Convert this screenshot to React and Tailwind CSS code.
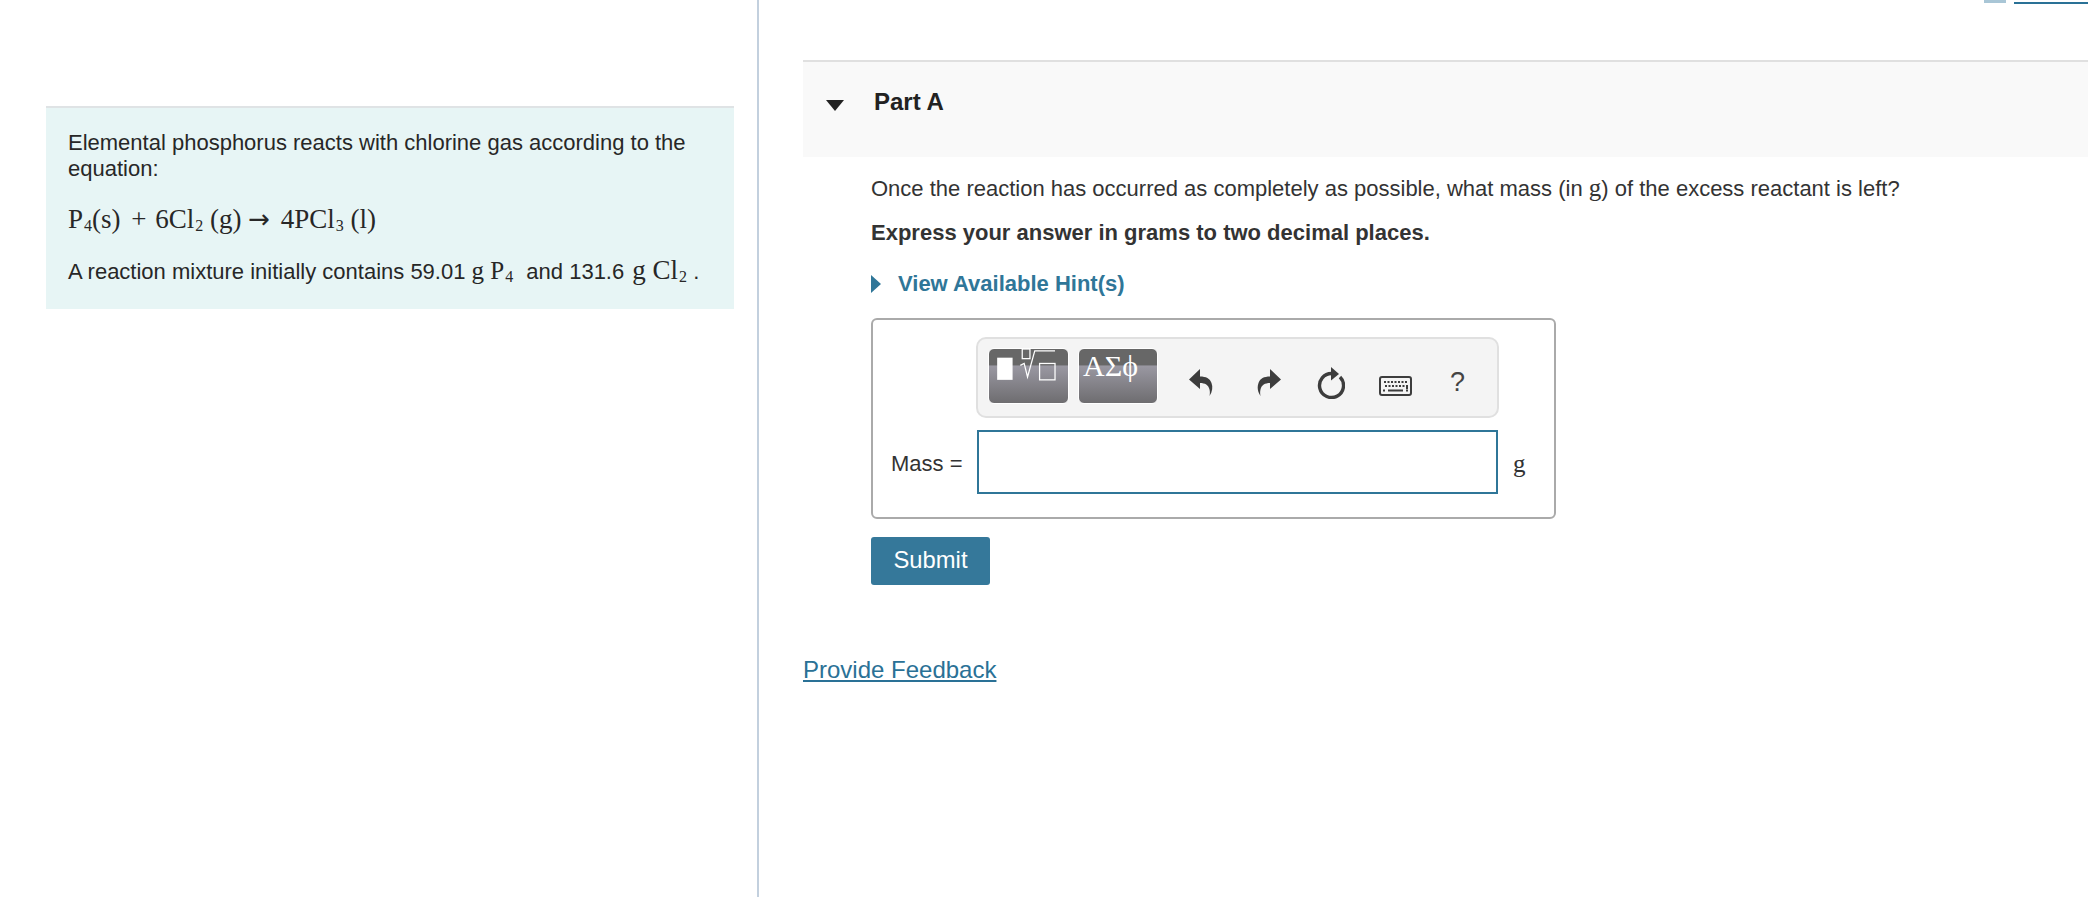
import React from "react";

const serif = "font-['Liberation_Serif',serif]";

const Sub = ({ children }) => (
  <sub className="static ml-px text-[16px] leading-none align-[-3px]">{children}</sub>
);

const UndoIcon = ({ flip }) => (
  <svg viewBox="0 0 24 27" className={`h-[27px] w-[24px] ${flip ? "-scale-x-100" : ""}`}>
    <path
      fill="#3d3d3d"
      d="M11 0 0 10.500 11 20v-6c5 0 8.500 2 9.500 6.500.5 2 .5 4 0 6.500 3-4.500 3.500-9 2-13C21 9.500 17 7.500 11 7.500V0z"
    />
  </svg>
);

const RotateIcon = () => (
  <svg viewBox="0 0 28 32" className="h-[32px] w-[28px]">
    <path
      fill="none"
      stroke="#3d3d3d"
      strokeWidth="3.400"
      d="M15 6.500A12 12 0 1 0 23 10"
    />
    <path fill="#3d3d3d" d="M14 0l8 7-8 6.500z" />
  </svg>
);

const KeyboardIcon = () => (
  <svg viewBox="0 0 33 20" className="h-[20px] w-[33px]">
    <rect x="1" y="1" width="31" height="18" rx="2" fill="#f4f4f4" stroke="#3d3d3d" strokeWidth="2" />
    <path
      stroke="#3d3d3d"
      strokeWidth="2"
      strokeDasharray="2 1.500"
      fill="none"
      d="M5 6h23M6 10h20"
    />
    <path stroke="#3d3d3d" strokeWidth="2" fill="none" d="M9 14.500h15M4 14.500h2M27 14.500h2M28 9v4" />
  </svg>
);

const TemplatesGlyph = () => (
  <svg viewBox="0 0 81 56" className="absolute inset-0 h-full w-full">
    <rect x="8" y="9" width="16" height="23" fill="#fff" />
    <path d="M32 17l4-2 3.500 14L47 2h21" fill="none" stroke="#fff" strokeWidth="1.300" />
    <rect x="34" y="0" width="8" height="10" fill="none" stroke="#fff" strokeWidth="1.300" />
    <rect x="52" y="15" width="16" height="17" fill="none" stroke="#fff" strokeWidth="1.300" />
  </svg>
);

const ToolButton = ({ children, className }) => (
  <div
    className={`relative h-[56px] overflow-hidden rounded-[6px] border border-white bg-[linear-gradient(#676767_0,#676767_30%,#9a98a2_31%,#6e6d70_100%)] ${className}`}
  >
    {children}
  </div>
);

export default function App() {
  return (
    <div className="flex h-[897px] overflow-hidden bg-white font-['Liberation_Sans',Arial,sans-serif] text-[22px] text-[#333]">
      {/* left column with the problem intro */}
      <div className="w-[759px] shrink-0 border-r-2 border-[#c3d0de] pl-[46px] pr-[23px] pt-[106px]">
        <div className="h-[203px] border-t-2 border-[#dfe3e5] bg-[#e7f5f5] px-[22px] pt-[22px] leading-[26px] text-[#272727]">
          <p>Elemental phosphorus reacts with chlorine gas according to the equation:</p>
          <p className={`${serif} mt-[22px] text-[27px] leading-[30px]`}>
            P<Sub>4</Sub>(s) <span className="ml-[4px]">+</span> <span className="ml-[2px]">6Cl</span><Sub>2</Sub> (g){" "}
            <span className="font-['DejaVu_Sans',sans-serif] text-[26px]">→</span>{" "}
            <span className="ml-[4px]">4PCl</span><Sub>3</Sub> (l)
          </p>
          <p className="mt-[23px]">
            A reaction mixture initially contains 59.01{" "}
            <span className={`${serif} text-[25px]`}>
              g P<Sub>4</Sub>
            </span>{" "}
            <span className="ml-[7px]">and 131.6</span>{" "}
            <span className={`${serif} ml-[2px] text-[27px]`}>g Cl<Sub>2</Sub></span> .
          </p>
        </div>
      </div>

      {/* right column with the question */}
      <div className="min-w-0 flex-1 pl-[44px]">
        <div className="flex h-[5px] items-end overflow-hidden pl-[1181px] leading-[26px] text-[#2a7196]">
          <div className="flex shrink-0 items-end gap-[8px]">
            <span className="mb-[2px] h-[3px] w-[22px] bg-[#a9c6d6]" />
            <span className="text-[24px] underline">Review</span>
          </div>
        </div>

        <div className="mt-[55px] flex h-[97px] border-t-2 border-[#e0e0e0] bg-[#f9f9f9] pl-[23px] pt-[27px]">
          <svg viewBox="0 0 18 11" className="mt-[11px] h-[11px] w-[18px]">
            <path fill="#222" d="M0 0h18L9 11z" />
          </svg>
          <h2 className="ml-[30px] text-[24px] font-bold leading-[26px] text-[#222]">Part A</h2>
        </div>

        <div className="pl-[68px]">
          <p className="mt-[18px] leading-[26px]">
            Once the reaction has occurred as completely as possible, what mass (in{" "}
            <span className={`${serif} text-[25px]`}>g</span>) of the excess reactant is left?
          </p>
          <p className="mt-[18px] font-bold leading-[26px]">
            Express your answer in grams to two decimal places.
          </p>
          <div className="mt-[25px] flex items-center font-bold leading-[26px] text-[#2f7698]">
            <svg viewBox="0 0 10 18" className="h-[18px] w-[10px]">
              <path fill="#2f7698" d="M0 0l10 9-10 9z" />
            </svg>
            <span className="ml-[17px]">View Available Hint(s)</span>
          </div>

          {/* answer box */}
          <div className="mt-[21px] h-[201px] w-[685px] rounded-[6px] border-2 border-[#aaa] pl-[18px] pt-[17px]">
            <div className="ml-[85px] flex h-[81px] w-[523px] items-start rounded-[10px] border-2 border-[#e0e0e0] bg-[#f4f4f4] pl-[10px] pt-[9px]">
              <ToolButton className="w-[81px]">
                <TemplatesGlyph />
              </ToolButton>
              <ToolButton className={`ml-[9px] w-[80px] ${serif} pl-[4px] text-[30px] leading-[34px] text-white`}>
                ΑΣϕ
              </ToolButton>
              <div className="ml-[31px] mt-[21px]">
                <UndoIcon />
              </div>
              <div className="ml-[44px] mt-[21px]">
                <UndoIcon flip />
              </div>
              <div className="ml-[36px] mt-[19px]">
                <RotateIcon />
              </div>
              <div className="ml-[34px] mt-[28px]">
                <KeyboardIcon />
              </div>
              <span className="ml-[38px] mt-[18px] text-[27px] leading-[32px] text-[#444]">?</span>
            </div>
            <div className="mt-[12px] flex items-center">
              <span className="mt-[3px] w-[86px] leading-[26px]">Mass =</span>
              <div className="h-[64px] w-[521px] border-2 border-[#2f7698] bg-white" />
              <span className={`${serif} ml-[15px] mt-[3px] text-[25px]`}>g</span>
            </div>
          </div>

          <button className="mt-[18px] block h-[48px] w-[119px] rounded-[3px] bg-[#35789a] pb-[2px] text-[23.800px] text-white">
            Submit
          </button>
        </div>

        <a className="mt-[72px] block w-fit text-[24px] leading-[26px] text-[#2a7196] underline">Provide Feedback</a>
      </div>
    </div>
  );
}
